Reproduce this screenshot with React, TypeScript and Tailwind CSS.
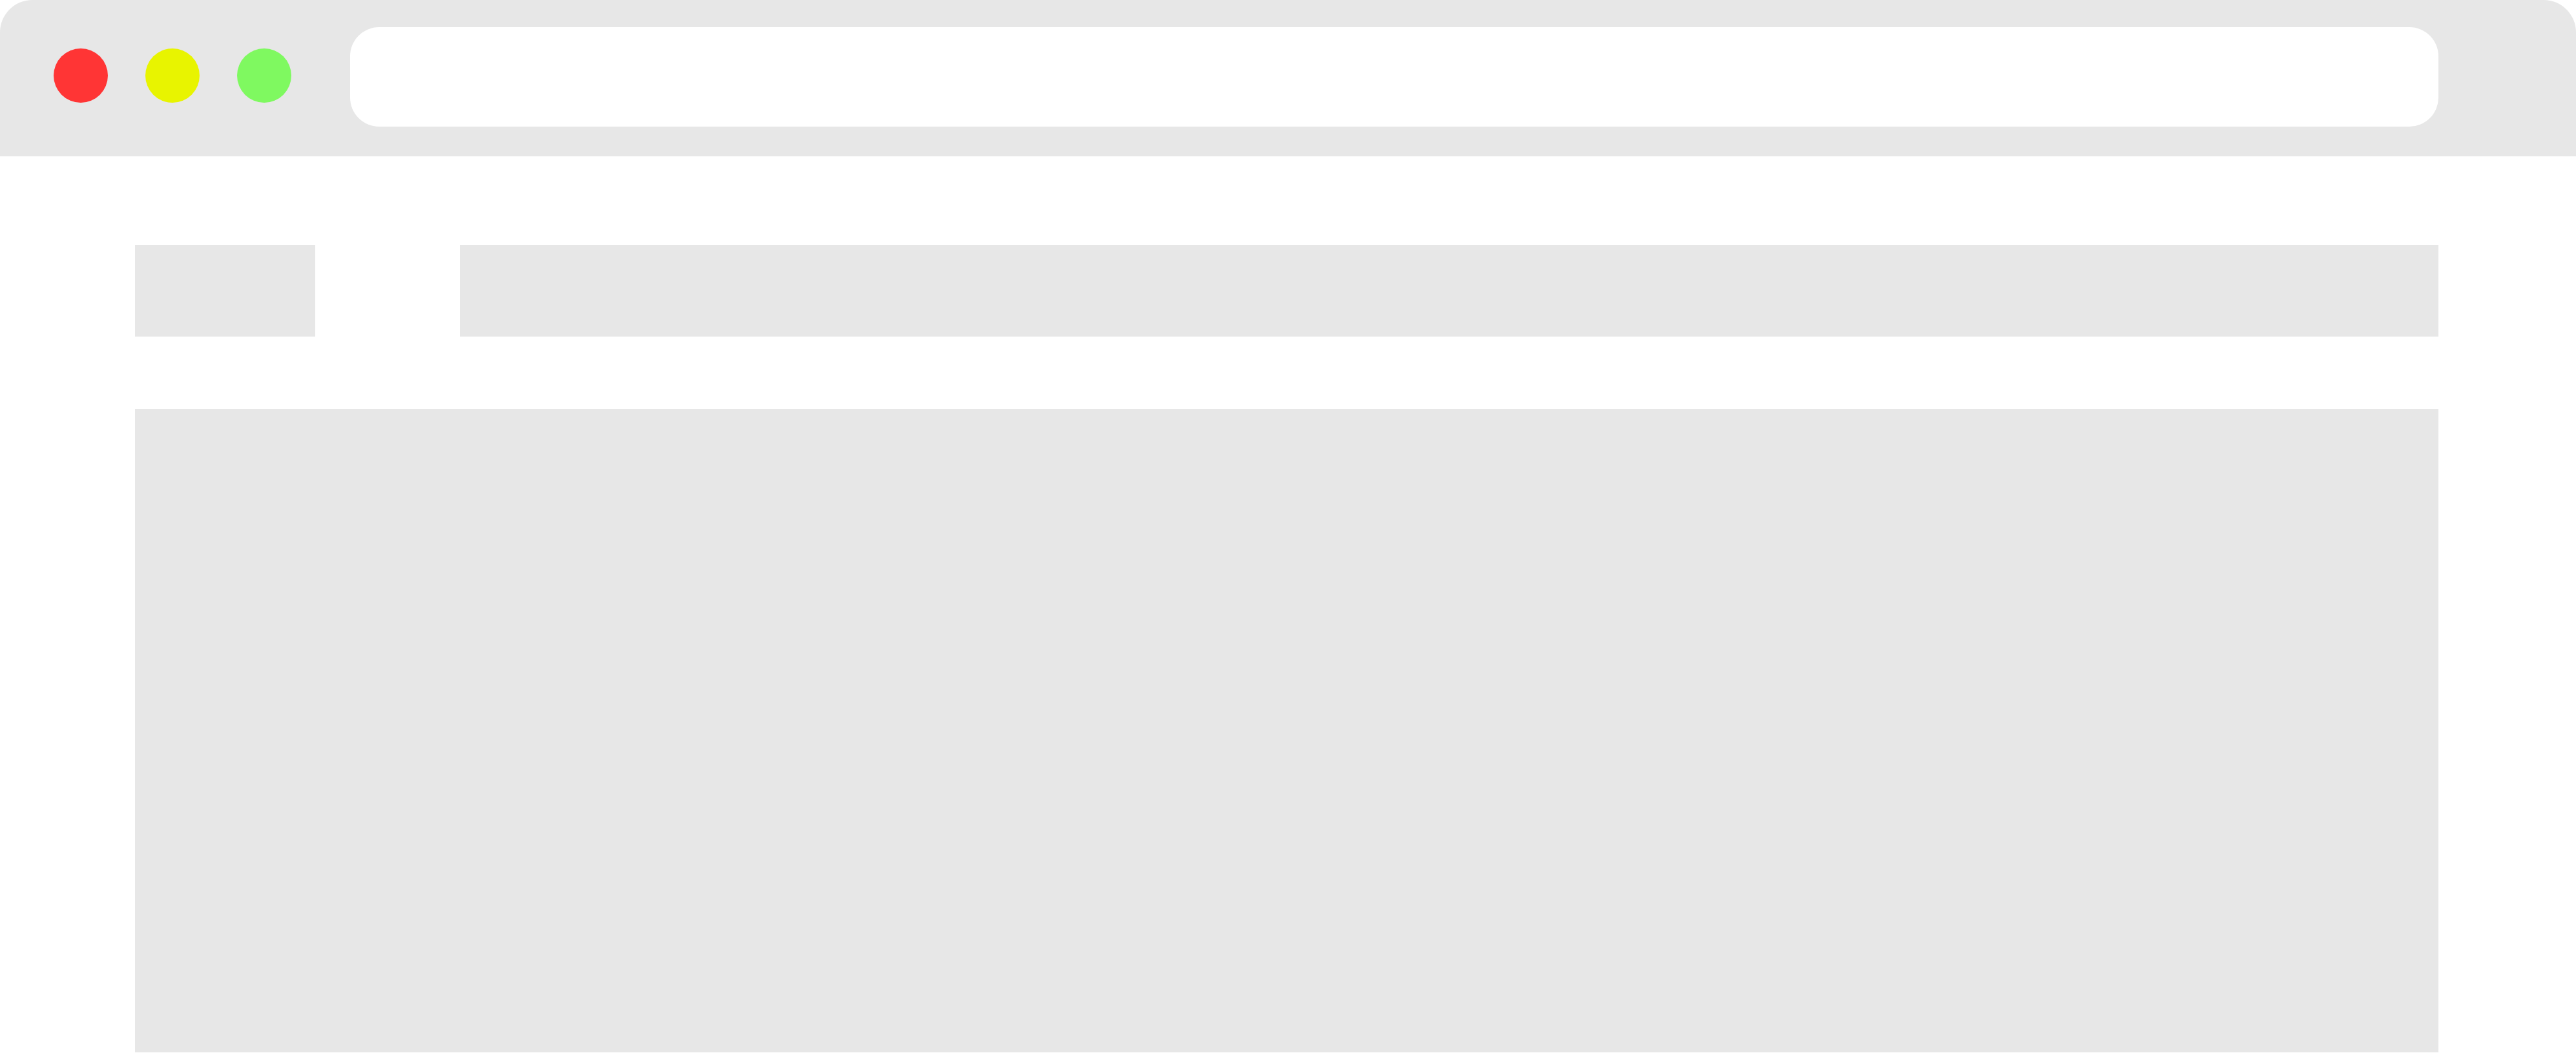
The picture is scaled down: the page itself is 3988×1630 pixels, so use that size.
export default function App() {
  return (
    <div className="w-[3988px] h-[1630px] bg-white overflow-hidden">
      <div className="h-[242px] w-full bg-[#e7e7e7] rounded-t-[50px] flex items-start">
        <div className="flex gap-[58px] mt-[75px] ml-[83px]">
          <div className="w-[84px] h-[84px] rounded-full bg-[#ff3535]" />
          <div className="w-[84px] h-[84px] rounded-full bg-[#e8f400]" />
          <div className="w-[84px] h-[84px] rounded-full bg-[#7ff960]" />
        </div>
        <div className="ml-[91px] mt-[42px] h-[154px] w-[3233px] bg-white rounded-[45px]" />
      </div>
      <div className="pl-[209px] pr-[213px] pt-[137px] flex flex-col gap-[112px]">
        <div className="flex h-[142px] gap-[224px]">
          <div className="w-[279px] bg-[#e7e7e7]" />
          <div className="flex-1 bg-[#e7e7e7]" />
        </div>
        <div className="h-[996px] bg-[#e7e7e7]" />
      </div>
    </div>
  );
}
